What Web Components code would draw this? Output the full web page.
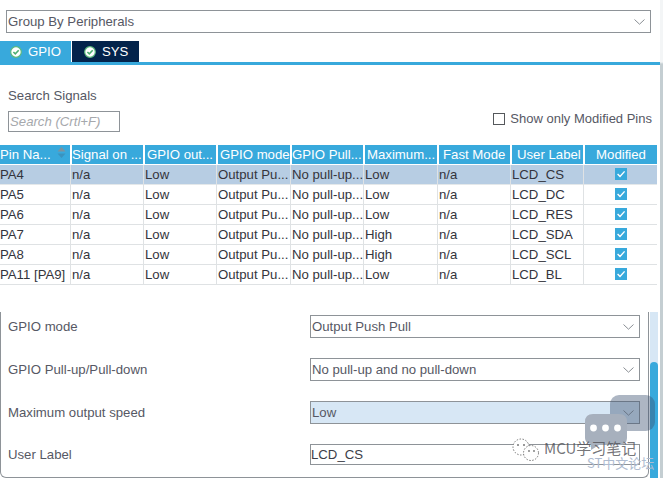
<!DOCTYPE html>
<html>
<head>
<meta charset="utf-8">
<title>Pinout</title>
<style>
html, body { margin: 0; padding: 0; background: #fff; }
body { width: 663px; height: 478px; overflow: hidden; font: 13.2px "Liberation Sans", Arial, sans-serif; }
</style>
</head>
<body>
<pin-config>
  <ui-select slot="group" style="--w:645px;--h:23px">Group By Peripherals</ui-select>

  <tab-item slot="tabs" active>GPIO</tab-item>
  <tab-item slot="tabs">SYS</tab-item>

  <search-bar slot="search"></search-bar>

  <pin-table slot="table">
    <pin-row selected data-cells="PA4|n/a|Low|Output Pu...|No pull-up...|Low|n/a|LCD_CS"></pin-row>
    <pin-row data-cells="PA5|n/a|Low|Output Pu...|No pull-up...|Low|n/a|LCD_DC"></pin-row>
    <pin-row data-cells="PA6|n/a|Low|Output Pu...|No pull-up...|Low|n/a|LCD_RES"></pin-row>
    <pin-row data-cells="PA7|n/a|Low|Output Pu...|No pull-up...|High|n/a|LCD_SDA"></pin-row>
    <pin-row data-cells="PA8|n/a|Low|Output Pu...|No pull-up...|High|n/a|LCD_SCL"></pin-row>
    <pin-row data-cells="PA11 [PA9]|n/a|Low|Output Pu...|No pull-up...|Low|n/a|LCD_BL"></pin-row>
  </pin-table>

  <config-panel slot="panel">
    <config-row label="GPIO mode"><ui-select style="--w:330px;--h:23px">Output Push Pull</ui-select></config-row>
    <config-row label="GPIO Pull-up/Pull-down"><ui-select style="--w:330px;--h:23px">No pull-up and no pull-down</ui-select></config-row>
    <config-row label="Maximum output speed"><ui-select hot style="--w:330px;--h:23px">Low</ui-select></config-row>
    <config-row label="User Label"><ui-input style="--w:330px;--h:21px">LCD_CS</ui-input></config-row>
  </config-panel>

  <water-mark slot="overlay"></water-mark>
</pin-config>

<script>
const pinConfigTpl = document.createElement("template");
pinConfigTpl.innerHTML = `
<style>
:host{
    display: flex;
    position: relative;
    width: 663px;
    height: 478px;
    overflow: hidden;
    color: #4d4f5c;
}
.main{
    width: 660px;
    display: flex;
    flex-direction: column;
}
.edge{
    width: 3px;
    margin-left: 0;
    background: linear-gradient(#f3f5f6 0, #f3f5f6 62px, #c4ced2 64px);
}
.group{
    padding: 10px 0 0 6px;
}
.tabs{
    display: flex;
    gap: 1px;
    margin-top: 8px;
    height: 21px;
    border-bottom: 3px solid #38a9dc;
}
.search{
    height: 80px;
}
.scroll{
    display: flex;
    margin-top: 27px;
    flex: 1;
}
.track{
    width: 8px;
    margin-left: 1px;
    background: #d7e7f5;
    display: flex;
    flex-direction: column;
    padding-top: 50px;
    box-sizing: border-box;
}
.thumb{
    flex: 1;
    background: #38a9dc;
    border-radius: 4px 4px 0 0;
}
</style>
<div class="main">
  <div class="group"><slot name="group"></slot></div>
  <div class="tabs"><slot name="tabs"></slot></div>
  <div class="search"><slot name="search"></slot></div>
  <slot name="table"></slot>
  <div class="scroll">
    <slot name="panel"></slot>
    <div class="track"><div class="thumb"></div></div>
  </div>
</div>
<div class="edge"></div>
<slot name="overlay"></slot>
`;
class PinConfig extends HTMLElement{
    constructor(){
      super();
      this.attachShadow({mode: "open"});
      this.shadowRoot.appendChild(pinConfigTpl.content.cloneNode(true));
    }
}
customElements.define("pin-config", PinConfig);

const chevron = `<svg width="11" height="6" viewBox="0 0 11 6"><path d="M0.5 0.5 L5.5 5.2 L10.5 0.5" fill="none" stroke="#8a8f94" stroke-width="1"/></svg>`;

class UiSelect extends HTMLElement{
    constructor(){
      super();
      this.attachShadow({mode: "open"});
      this.shadowRoot.innerHTML = `
      <style>
      :host{
          display: flex;
          align-items: center;
          justify-content: space-between;
          box-sizing: border-box;
          width: var(--w);
          height: var(--h);
          border: 1px solid #8e9398;
          padding: 0 5px 0 1px;
          font-size: 13.2px;
          color: #565864;
          background: #fff;
      }
      :host([hot]){
          background: #d7e7f5;
      }
      svg{ display: block; }
      </style>
      <span><slot></slot></span>${chevron}`;
    }
}
customElements.define("ui-select", UiSelect);

class UiInput extends HTMLElement{
    constructor(){
      super();
      this.attachShadow({mode: "open"});
      this.shadowRoot.innerHTML = `
      <style>
      :host{
          display: flex;
          align-items: center;
          box-sizing: border-box;
          width: var(--w);
          height: var(--h);
          border: 1px solid #8e9398;
          font-size: 13.2px;
          color: #3c3e48;
      }
      </style>
      <slot></slot>`;
    }
}
customElements.define("ui-input", UiInput);

class TabItem extends HTMLElement{
    constructor(){
      super();
      this.attachShadow({mode: "open"});
      this.shadowRoot.innerHTML = `
      <style>
      :host{
          display: flex;
          align-items: center;
          box-sizing: border-box;
          height: 21px;
          width: 67px;
          padding-left: 12px;
          gap: 6px;
          background: #03234b;
          color: #fff;
          font-size: 13.2px;
      }
      :host([active]){
          width: 71px;
          padding-left: 10px;
          background: #38a9dc;
      }
      svg{ display: block; }
      </style>
      <svg width="12" height="12" viewBox="0 0 12 12">
        <circle cx="6" cy="6" r="5.3" fill="#fff" stroke="#5dba7e" stroke-width="1.2"/>
        <path d="M3.4 6 L5.3 7.9 L8.7 4.3" fill="none" stroke="#4dae70" stroke-width="1.6"/>
      </svg>
      <slot></slot>`;
    }
}
customElements.define("tab-item", TabItem);

class SearchBar extends HTMLElement{
    constructor(){
      super();
      this.attachShadow({mode: "open"});
      this.shadowRoot.innerHTML = `
      <style>
      :host{
          display: block;
          height: 80px;
          box-sizing: border-box;
          padding: 23px 8px 0 8px;
          font-size: 13.2px;
          color: #565864;
      }
      .title{
          line-height: 15px;
      }
      .line{
          display: flex;
          align-items: center;
          justify-content: space-between;
          margin-top: 8px;
      }
      .field{
          box-sizing: border-box;
          width: 112px;
          height: 21px;
          border: 1px solid #8e9398;
          padding-left: 1px;
          line-height: 19px;
          font-style: italic;
          color: #a6a8ac;
      }
      .only{
          display: flex;
          align-items: center;
          gap: 5px;
          margin-top: -6px;
          font-size: 13px;
      }
      .box{
          box-sizing: border-box;
          width: 12px;
          height: 12px;
          border: 1px solid #55585c;
      }
      </style>
      <div class="title">Search Signals</div>
      <div class="line">
        <div class="field">Search (Crtl+F)</div>
        <div class="only"><div class="box"></div><span>Show only Modified Pins</span></div>
      </div>`;
    }
}
customElements.define("search-bar", SearchBar);

const COLS = "72px 73px 73px 74px 73px 74px 73px 73px 72px";

class PinTable extends HTMLElement{
    constructor(){
      super();
      this.attachShadow({mode: "open"});
      const heads = ["Pin Na...","Signal on ...","GPIO out...","GPIO mode","GPIO Pull...","Maximum...","Fast Mode","User Label","Modified"];
      this.shadowRoot.innerHTML = `
      <style>
      :host{
          display: block;
          width: 657px;
          font-size: 13.2px;
      }
      .head{
          display: grid;
          grid-template-columns: ${COLS};
          height: 20px;
      }
      .head div{
          position: relative;
          margin-right: 2px;
          background: #38a9dc;
          color: #fff;
          line-height: 19px;
          height: 19px;
          padding-left: 2px;
          white-space: nowrap;
      }
      .head div:nth-child(1), .head div:nth-child(2), .head div:nth-child(5){ padding-left: 0; }
      .head div:nth-child(7){ padding-left: 4px; }
      .head div:nth-child(8){ padding-left: 5px; }
      .head div:nth-child(9){ text-align: center; padding-left: 0; margin-right: 0; }
      .sort{
          position: absolute;
          right: 4px;
          top: 2px;
          display: block;
      }
      </style>
      <div class="head">${heads.map(h => `<div>${h}${h === "Pin Na..." ? `<svg class="sort" width="9" height="11" viewBox="0 0 9 11"><path d="M4.5 0 L8.5 4.5 H0.5Z" fill="#7d929e"/><path d="M0.5 6.5 H8.5 L4.5 11Z" fill="#3a93bf"/></svg>` : ""}</div>`).join("")}</div>
      <slot></slot>`;
    }
}
customElements.define("pin-table", PinTable);

class PinRow extends HTMLElement{
    constructor(){
      super();
      this.attachShadow({mode: "open"});
      const template = document.createElement("template");
      template.innerHTML = `
      <style>
      :host{
          display: grid;
          grid-template-columns: ${COLS};
          height: 20px;
          box-sizing: border-box;
          border-bottom: 1px solid #dfe2e4;
          color: #33343c;
      }
      :host([selected]){
          background: #b7cde3;
          border-bottom-color: #e4e8ea;
      }
      .c{
          box-sizing: border-box;
          border-right: 1px solid #dfe2e4;
          margin-right: 1px;
          line-height: 20px;
          white-space: nowrap;
      }
      .m{
          display: flex;
          justify-content: center;
          border-right: 0;
          margin-right: 0;
          padding-top: 3px;
      }
      .tick{
          width: 12px;
          height: 12px;
          background: #38a9dc;
          display: block;
      }
      </style>
      <span id="cells" style="display:contents"></span>`;
      this.shadowRoot.appendChild(template.content.cloneNode(true));
    }

    connectedCallback(){
        this.render();
    }

    render(){
        const cells = this.getAttribute("data-cells").split("|");
        this.shadowRoot.querySelector("#cells").innerHTML =
          cells.map(c => `<div class="c">${c}</div>`).join("") +
          `<div class="c m"><svg class="tick" viewBox="0 0 12 12"><path d="M2.6 6 L5 8.4 L9.6 3.4" fill="none" stroke="#fff" stroke-width="1.4"/></svg></div>`;
    }
}
customElements.define("pin-row", PinRow);

class ConfigPanel extends HTMLElement{
    constructor(){
      super();
      this.attachShadow({mode: "open"});
      this.shadowRoot.innerHTML = `
      <style>
      :host{
          display: flex;
          flex-direction: column;
          gap: 20px;
          box-sizing: border-box;
          width: 649px;
          height: 166px;
          padding: 3px 7px 0 7px;
          border: 1px solid #8e9398;
          border-top: 0;
          border-radius: 0 0 6px 6px;
      }
      </style>
      <slot></slot>`;
    }
}
customElements.define("config-panel", ConfigPanel);

class ConfigRow extends HTMLElement{
    constructor(){
      super();
      this.attachShadow({mode: "open"});
      this.shadowRoot.innerHTML = `
      <style>
      :host{
          display: grid;
          grid-template-columns: 302px 1fr;
          align-items: center;
          font-size: 13.2px;
          color: #565864;
      }
      </style>
      <span id="label"></span><slot></slot>`;
    }

    connectedCallback(){
        this.shadowRoot.querySelector("#label").textContent = this.getAttribute("label");
    }
}
customElements.define("config-row", ConfigRow);

class WaterMark extends HTMLElement{
    constructor(){
      super();
      this.attachShadow({mode: "open"});
      this.shadowRoot.innerHTML = `
      <style>
      :host{
          display: block;
          position: absolute;
          left: 0;
          top: 0;
          width: 663px;
          height: 478px;
          pointer-events: none;
      }
      .back, .front, .wx, .name, .st{ position: absolute; }
      .back{
          left: 610px; top: 395px; width: 45px; height: 36px;
          background: rgba(60,82,112,.42);
          border-radius: 9px 9px 9px 0;
      }
      .front{ left: 585px; top: 414px; }
      .wx{ left: 511px; top: 438px; }
      .name{
          left: 544px; top: 439px;
          font: 15px "Noto Sans CJK SC", "Liberation Sans", sans-serif;
          color: rgba(80,80,86,.8);
          line-height: 18px;
      }
      .st{
          left: 587px; top: 455px;
          font: 13px "Noto Sans CJK SC", "Liberation Sans", sans-serif;
          color: #aebbd0;
          line-height: 16px;
      }
      </style>
      <div class="back"></div>
      <svg class="front" width="42" height="36" viewBox="0 0 42 36">
        <path d="M8 0 H34 Q42 0 42 8 V24 Q42 31 34 31 H14 L6 36 V30 Q0 29 0 24 V8 Q0 0 8 0Z" fill="#a7b0bd"/>
        <circle cx="8.5" cy="14" r="3.4" fill="#fff"/>
        <circle cx="20.5" cy="14" r="3.4" fill="#fff"/>
        <circle cx="32.5" cy="14" r="3.4" fill="#fff"/>
      </svg>
      <svg class="wx" width="30" height="24" viewBox="0 0 30 24">
        <circle cx="10" cy="9" r="8" fill="#fff" stroke="#777" stroke-width="1" stroke-dasharray="1.5 1.5"/>
        <circle cx="20" cy="15" r="7.5" fill="#fff" stroke="#777" stroke-width="1" stroke-dasharray="1.5 1.5"/>
        <circle cx="7" cy="7" r="1" fill="#777"/>
        <circle cx="13" cy="7" r="1" fill="#777"/>
        <circle cx="18" cy="13" r=".9" fill="#777"/>
        <circle cx="23" cy="13" r=".9" fill="#777"/>
      </svg>
      <div class="name">MCU学习笔记</div>
      <div class="st">ST中文论坛</div>`;
    }
}
customElements.define("water-mark", WaterMark);
</script>
</body>
</html>
